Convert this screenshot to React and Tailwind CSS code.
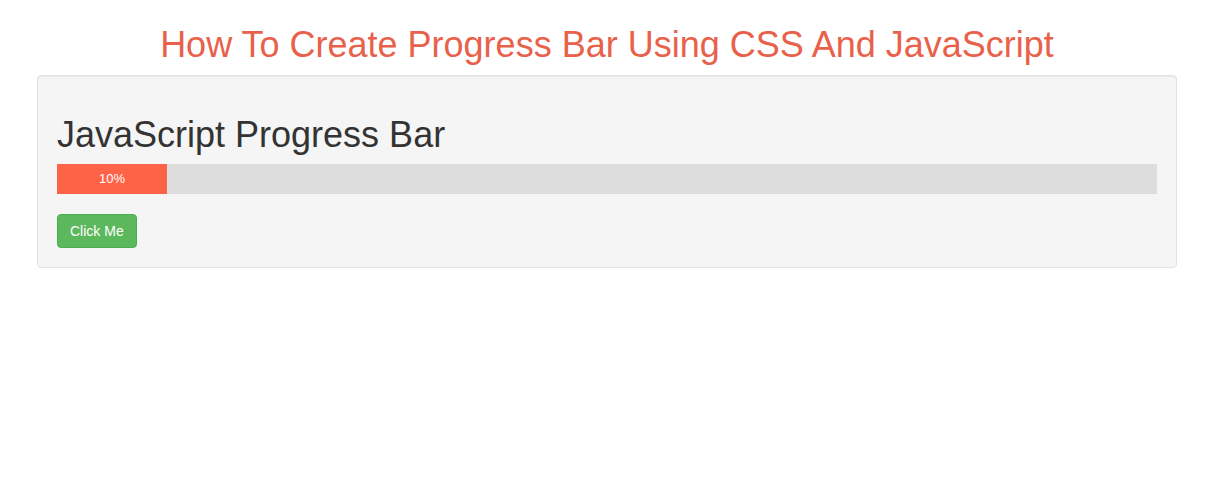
import React, { useState } from 'react';

function App() {
  const [progress, setProgress] = useState(10);

  const handleClick = () => {
    setProgress((p) => (p >= 100 ? 10 : p + 10));
  };

  return (
    <div className="min-h-screen bg-white font-['Liberation_Sans',Arial,sans-serif] text-[#333]">
      <div className="ml-[22px] w-[1170px] px-[15px] pt-[25px]">
        <h1 className="mb-[10px] text-center text-[36px] leading-[40px] text-[#e8614b]">
          How To Create Progress Bar Using CSS And JavaScript
        </h1>
        <div className="rounded-[4px] border border-[#e3e3e3] bg-[#f5f5f5] p-[19px] shadow-[inset_0_1px_1px_rgba(0,0,0,0.05)]">
          <h1 className="mt-[20px] mb-[9px] text-[36px] leading-[40px] text-[#333]">JavaScript Progress Bar</h1>
          <div className="mb-[20px] h-[30px] w-full bg-[#ddd]">
            <div
              className="h-full bg-[#ff6347] text-center text-[13px] leading-[30px] text-white"
              style={{ width: `${progress}%` }}
            >
              {progress}%
            </div>
          </div>
          <button
            type="button"
            onClick={handleClick}
            className="block h-[34px] rounded-[4px] border border-[#4cae4c] bg-[#5cb85c] px-[12px] text-[14px] leading-[20px] text-white hover:bg-[#449d44]"
          >
            Click Me
          </button>
        </div>
      </div>
    </div>
  );
}

export default App;
